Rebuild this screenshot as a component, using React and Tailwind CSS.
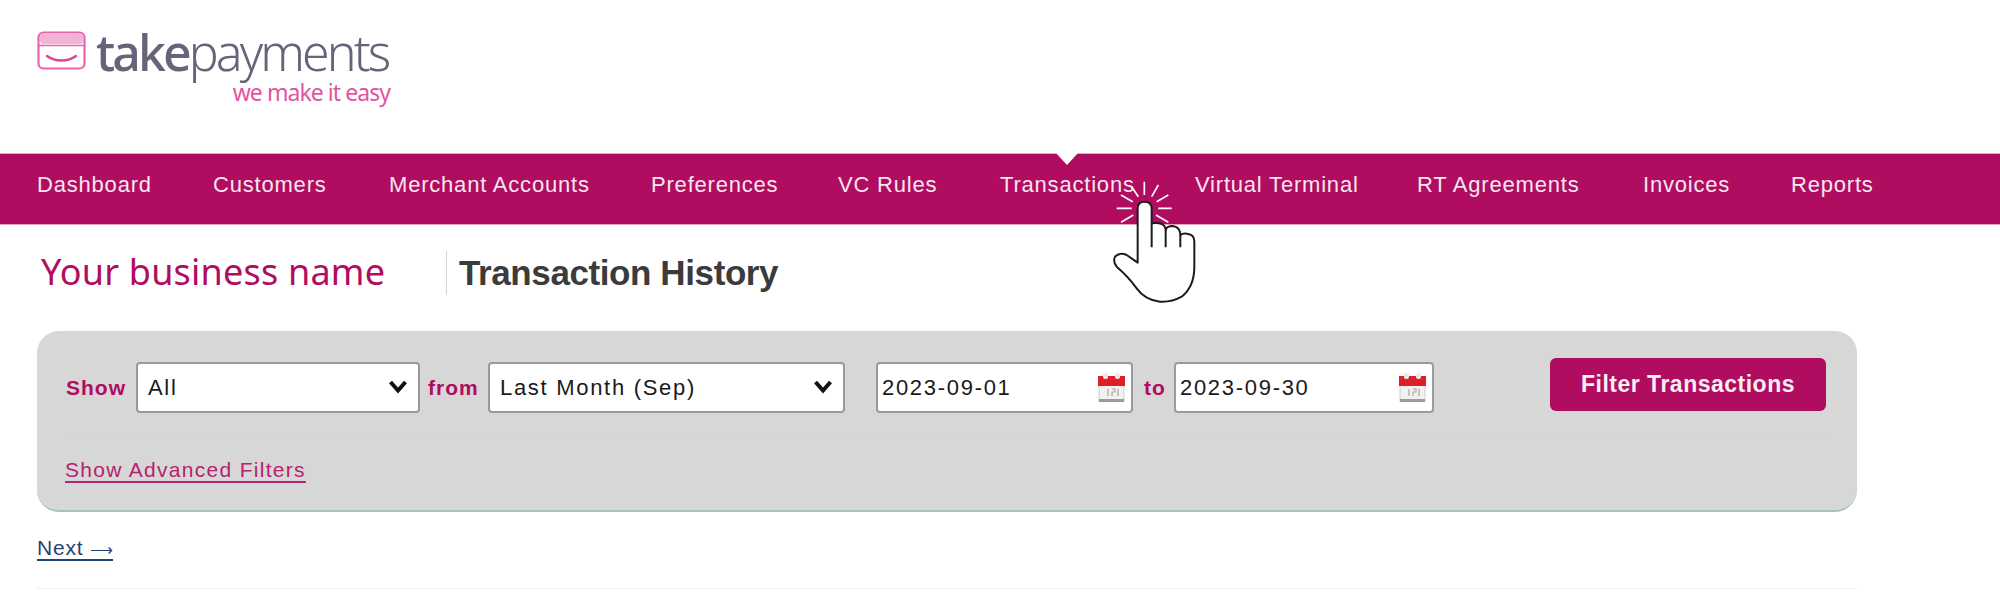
import React from 'react';

const navItems = [
  ['Dashboard', 115],
  ['Customers', 115],
  ['Merchant Accounts', 201],
  ['Preferences', 126],
  ['VC Rules', 101],
  ['Transactions', 134],
  ['Virtual Terminal', 161],
  ['RT Agreements', 165],
  ['Invoices', 87],
  ['Reports', 83],
];

function LogoMark() {
  return (
    <svg width="50" height="40" viewBox="0 0 50 40" fill="none" className="shrink-0">
      <rect x="1.5" y="1.5" width="46" height="36" rx="5" stroke="#ea62ad" strokeWidth="2.2" />
      <rect x="3" y="3" width="43" height="10" rx="3" fill="#f3b3d6" />
      <path d="M1.5 14.5H47.5" stroke="#ea62ad" strokeWidth="1.6" />
      <path d="M10 25c8 6 21 6 29 0" stroke="#e0429b" strokeWidth="2.4" strokeLinecap="round" />
    </svg>
  );
}

function Chevron() {
  return (
    <svg width="20" height="15" viewBox="0 0 20 15" fill="none" className="shrink-0 -mt-[2px]">
      <path d="M2.5 3L10 11.5L17.5 3" stroke="#111" strokeWidth="4" />
    </svg>
  );
}

function CalendarIcon() {
  return (
    <svg width="27" height="29" viewBox="0 0 27 29" className="shrink-0">
      <rect x="1" y="8" width="25" height="20" fill="#f1f1f1" stroke="#cfcfcf" />
      <rect x="0" y="3" width="27" height="10" fill="#dd1f2a" />
      <rect x="5" y="0" width="5" height="6" rx="2" fill="#e9e9e9" />
      <rect x="17" y="0" width="5" height="6" rx="2" fill="#e9e9e9" />
      <rect x="1" y="26" width="25" height="3" fill="#9b9b9b" />
      <path d="M10 16v7M14 16h3v3h-3v4M20 16v7" stroke="#a5a5a5" strokeWidth="1.2" fill="none" />
    </svg>
  );
}

function Hand() {
  return (
    <svg width="90" height="130" viewBox="480 111 270 390" fill="none" className="absolute left-[1110px] top-[177px]">
      <g stroke="#fff" strokeWidth="5">
        <path d="M583 125V165M545 140L565 170M625 135L605 170M655 165L620 185M665 205H625M655 247L618 225M513 165L548 185M500 205H545M513 247L550 225" />
      </g>
      <path
        d="M563 368V205Q563 185 583 185Q605 185 605 205V250Q645 245 647 270Q650 258 668 258Q690 260 691 285Q700 278 715 282Q733 285 733 305V380Q733 440 695 470Q665 487 630 485Q585 480 560 445Q535 410 500 380Q488 365 495 350Q510 335 530 345Z"
        fill="#fff"
        stroke="#1c1c1c"
        strokeWidth="6"
        strokeLinejoin="round"
      />
      <path d="M605 250V322M647 270V322M691 285V322" stroke="#1c1c1c" strokeWidth="6" />
    </svg>
  );
}

function FilterLabel({ children, className = '' }) {
  return <span className={`text-[21px] leading-none font-bold text-[#b00c60] tracking-[1px] ${className}`}>{children}</span>;
}

function SelectBox({ value, className }) {
  return (
    <div className={`h-[51px] flex items-center justify-between bg-white border-2 border-[#9a9a9a] rounded-[4px] pl-[10px] pr-[10px] ${className}`}>
      <span className="text-[22px] tracking-[1.7px] text-[#1a1a1a]">{value}</span>
      <Chevron />
    </div>
  );
}

function DateBox({ value, className }) {
  return (
    <div className={`h-[51px] flex items-center justify-between bg-white border-2 border-[#9a9a9a] rounded-[4px] pl-[4px] pr-[6px] ${className}`}>
      <span className="text-[22px] tracking-[1.7px] text-[#1a1a1a]">{value}</span>
      <CalendarIcon />
    </div>
  );
}

export default function App() {
  return (
    <div className="relative w-[2000px] h-[593px] overflow-hidden bg-white font-['Liberation_Sans',Arial,sans-serif]">
      <header className="h-[153px] pl-[37px] pt-[27px] flex items-start gap-[9px]">
        <div className="pt-[4px]">
          <LogoMark />
        </div>
        <div className="w-[294px] font-['Noto_Sans',sans-serif]">
          <div className="text-[50px] leading-[50px] tracking-[-2.9px] text-[#66647a] whitespace-nowrap">
            <span className="font-medium">take</span>
            <span className="font-light">payments</span>
          </div>
          <div className="mt-[5px] text-right text-[23px] leading-[20px] tracking-[-0.95px] text-[#e2549f] whitespace-nowrap">we make it easy</div>
        </div>
      </header>

      <nav className="h-[72px] bg-[#b00c60] border-t border-[#e6a3c6] border-b flex items-start pl-[37px] pt-[18px] gap-[61px]">
        {navItems.map(([label, width]) => (
          <a key={label} style={{ width }} className="relative block text-[22px] leading-[26px] tracking-[0.8px] text-[#f6e6ef] whitespace-nowrap">
            {label}
            {label === 'Transactions' && (
              <span className="absolute left-[56px] top-[-19px] border-x-[11px] border-t-[12px] border-x-transparent border-t-white" />
            )}
          </a>
        ))}
      </nav>

      <div className="h-[106px] flex items-start pl-[41px] pt-[25px]">
        <div className="w-[405px] text-[36px] leading-[44px] font-['Noto_Sans',sans-serif] text-[#b00c60] tracking-[0.2px] whitespace-nowrap">Your business name</div>
        <div className="h-[44px] mt-[1px] border-l border-[#d4d4d4] pl-[12px] text-[35px] leading-[44px] font-bold tracking-[-0.4px] text-[#3b3b3b] whitespace-nowrap">Transaction History</div>
      </div>

      <section className="ml-[37px] w-[1820px] h-[181px] bg-[#d7d7d7] rounded-[22px] border-b-2 border-[#a8c0c4] px-[28px] pt-[30px]">
        <div className="flex items-center h-[52px]">
          <FilterLabel className="w-[70px] ml-[1px]">Show</FilterLabel>
          <SelectBox value="All" className="w-[284px]" />
          <FilterLabel className="ml-[8px] w-[60px]">from</FilterLabel>
          <SelectBox value="Last Month (Sep)" className="w-[357px]" />
          <DateBox value="2023-09-01" className="ml-[31px] w-[257px]" />
          <FilterLabel className="ml-[11px] w-[30px]">to</FilterLabel>
          <DateBox value="2023-09-30" className="w-[260px]" />
          <button className="ml-[116px] -mt-[6px] w-[276px] h-[53px] bg-[#b00c60] rounded-[6px] text-[23px] font-bold text-[#f8eef3] tracking-[0.5px]">Filter Transactions</button>
        </div>
        <div className="mt-[25px] border-t border-dotted border-[#cfd6d8]" />
        <a className="block mt-[18px] text-[21px] leading-[26px] tracking-[1.3px] text-[#b5236d] underline underline-offset-4 whitespace-nowrap w-fit">Show Advanced Filters</a>
      </section>

      <a className="block ml-[37px] mt-[23px] w-fit text-[21px] leading-[26px] tracking-[0.8px] text-[#1f4472] underline underline-offset-4 whitespace-nowrap">Next <span className="text-[16px] tracking-normal">⟶</span></a>
      <div className="ml-[37px] mt-[25px] w-[1820px] border-t border-[#eef1f1]" />

      <Hand />
    </div>
  );
}
